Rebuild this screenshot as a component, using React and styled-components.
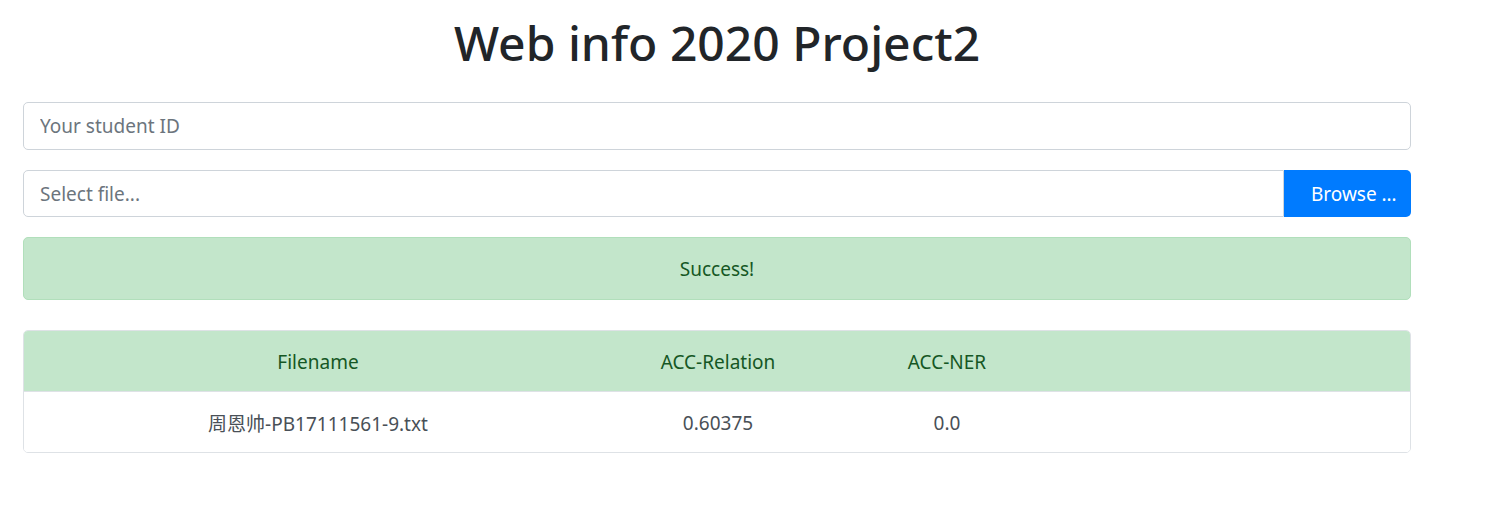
import React from "react";
import styled, { createGlobalStyle } from "styled-components";

const Global = createGlobalStyle`
  html, body { margin: 0; padding: 0; background: #fff; }
  body {
    font-family: "Noto Sans", "Noto Sans CJK SC", sans-serif;
    color: #212529;
  }
  * { box-sizing: border-box; }
`;

const Page = styled.div`
  width: 1388px;
  margin-left: 23px;
  display: flex;
  flex-direction: column;
`;

const Title = styled.h1`
  margin: 11px 0 27px;
  text-align: center;
  font-size: 48px;
  font-weight: 500;
  line-height: 64px;
  color: #212529;
`;

const Field = styled.input`
  height: 48px;
  width: 100%;
  padding: 0 16px;
  border: 1px solid #ced4da;
  border-radius: 5px;
  font: inherit;
  font-size: 19px;
  color: #495057;
  outline: none;
  &::placeholder { color: #6c757d; }
`;

const Group = styled.div`
  display: flex;
  margin-top: 20px;
  height: 47px;
`;

const GroupField = styled(Field)`
  height: 47px;
  flex: 1;
  border-radius: 5px 0 0 5px;
`;

const BrowseButton = styled.button`
  width: 127px;
  border: none;
  background: #007bff;
  color: #fff;
  font: inherit;
  font-size: 19px;
  border-radius: 0 5px 5px 0;
  padding: 0 10px 0 27px;
  text-align: left;
  white-space: nowrap;
`;

const Alert = styled.div`
  margin-top: 20px;
  height: 63px;
  display: flex;
  align-items: center;
  justify-content: center;
  background: #c3e6cb;
  border: 1px solid #b1dfbb;
  border-radius: 5px;
  color: #155724;
  font-size: 19px;
`;

const Table = styled.div`
  margin-top: 30px;
  border: 1px solid #dee2e6;
  border-radius: 5px;
  overflow: hidden;
  font-size: 19px;
`;

const Row = styled.div`
  display: grid;
  grid-template-columns: 588px 212px 246px 1fr;
  align-items: center;
  padding-top: 2px;
  height: ${p => (p.$head ? "62px" : "60px")};
  background: ${p => (p.$head ? "#c3e6cb" : "#fff")};
  color: ${p => (p.$head ? "#155724" : "#495057")};
  ${p => p.$head && "margin: -1px -1px 0; border: 1px solid #b1dfbb; border-bottom-color: #dee2e6;"}
`;

const Cell = styled.div`
  text-align: center;
`;

export default function App() {
  return (
    <>
      <Global />
      <Page>
        <Title>Web info 2020 Project2</Title>
        <Field placeholder="Your student ID" />
        <Group>
          <GroupField placeholder="Select file..." readOnly />
          <BrowseButton>Browse …</BrowseButton>
        </Group>
        <Alert>Success!</Alert>
        <Table>
          <Row $head>
            <Cell>Filename</Cell>
            <Cell>ACC-Relation</Cell>
            <Cell>ACC-NER</Cell>
            <Cell />
          </Row>
          <Row>
            <Cell>周恩帅-PB17111561-9.txt</Cell>
            <Cell>0.60375</Cell>
            <Cell>0.0</Cell>
            <Cell />
          </Row>
        </Table>
      </Page>
    </>
  );
}
